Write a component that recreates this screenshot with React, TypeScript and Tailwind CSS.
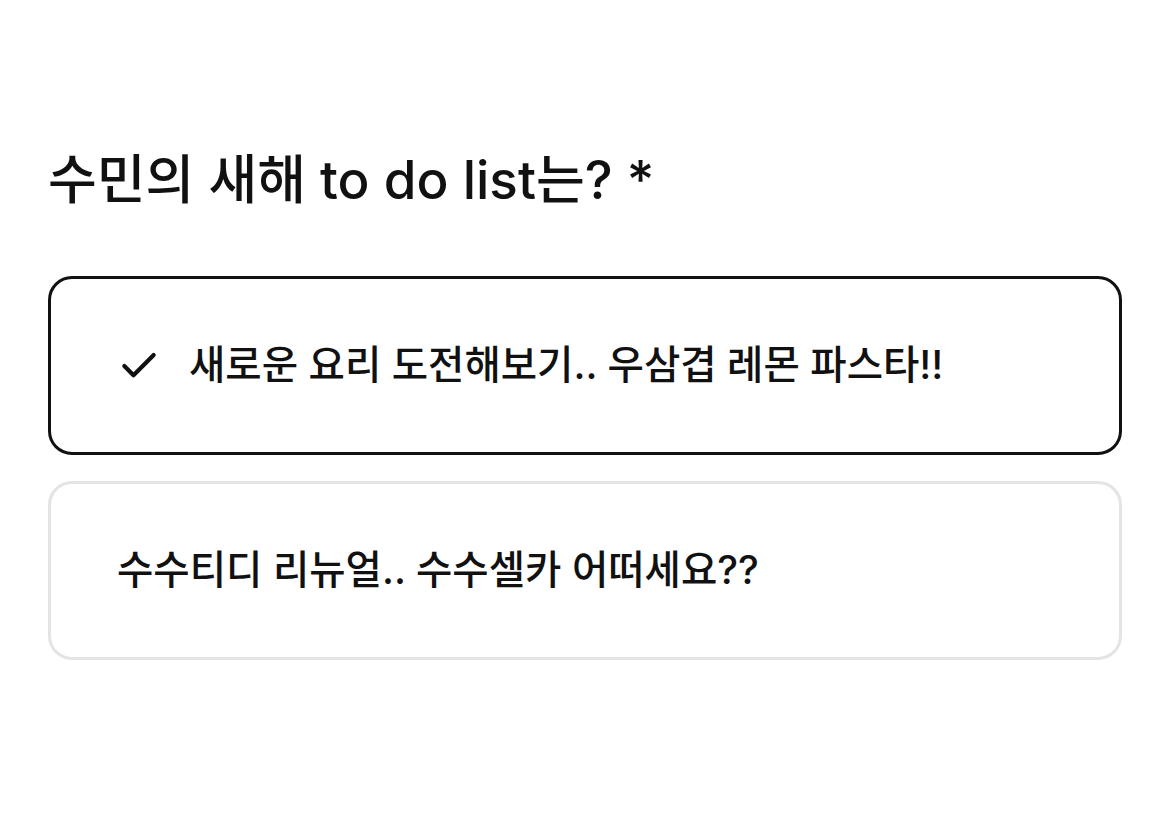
import { Check } from "lucide-react";

const options = [
  { id: 1, label: "새로운 요리 도전해보기.. 우삼겹 레몬 파스타!!", selected: true },
  { id: 2, label: "수수티디 리뉴얼.. 수수셀카 어떠세요??", selected: false },
];

const App = () => {
  return (
    <div
      className="w-[1170px] h-[824px] bg-white text-[#111111] px-[48px] pt-[147px]"
      style={{ fontFamily: 'Inter, "Noto Sans CJK KR", sans-serif' }}
    >
      <h1 className="text-[53px] font-medium leading-[66px]">
        수민의 새해 to do list는? *
      </h1>

      <div className="mt-[63px] flex flex-col gap-[26px]">
        {options.map((option) => (
          <div
            key={option.id}
            className={
              option.selected
                ? "h-[179px] rounded-[24px] border-[3px] border-[#111111] flex items-center px-[66px]"
                : "h-[179px] rounded-[24px] border-[3px] border-[#e4e4e4] flex items-center px-[66px]"
            }
          >
            {option.selected && (
              <Check className="w-[44px] h-[44px] mr-[28px]" strokeWidth={2.3} />
            )}
            <span className="text-[39.5px] font-medium">{option.label}</span>
          </div>
        ))}
      </div>
    </div>
  );
};

export default App;
